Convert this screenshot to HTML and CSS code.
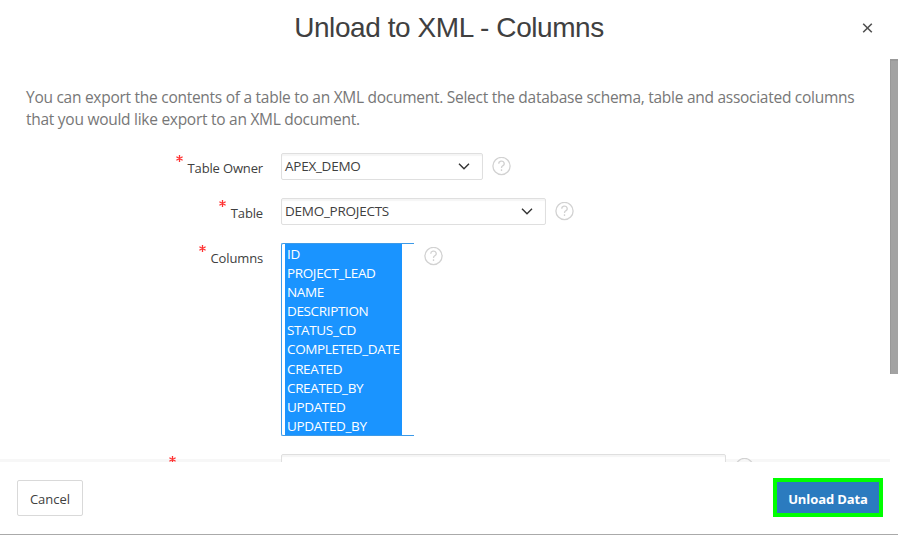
FILE: index.html
```html
<!DOCTYPE html>
<html lang="en">
<head>
<meta charset="utf-8">
<title>Unload to XML - Columns</title>
<link rel="stylesheet" href="styles.css">
</head>
<body>
<div class="dialog">
  <header class="header">
    <h1 class="title">Unload to XML - Columns</h1>
    <svg class="close" width="11" height="10" viewBox="0 0 11 10"><path d="M1.2.8l8.6 8.4M9.8.8L1.2 9.2"/></svg>
  </header>
  <main class="content">
    <div class="body">
      <p class="intro"><span class="line">You can export the contents of a table to an XML document. Select the database schema, table and associated columns</span> <span class="line">that you would like export to an XML document.</span></p>
      <div class="row">
        <div class="label"><svg class="req" viewBox="0 0 7 7"><path d="M3.5 0v7M.4 1.7l6.2 3.6M6.6 1.7L.4 5.3"/></svg><span class="name">Table Owner</span></div>
        <div class="select short"><span>APEX_DEMO</span><svg width="12" height="7" viewBox="0 0 12 7"><path d="M1 .8l5 4.9L11 .8"/></svg></div>
        <svg class="help" viewBox="0 0 19 19"><circle cx="9.5" cy="9" r="8.6"/><path d="M6.8 6.7a2.7 2.5 0 1 1 3.9 2.1c-.9.5-1.2.8-1.2 2.2M9.5 12.3v1.6"/></svg>
      </div>
      <div class="row">
        <div class="label"><svg class="req" viewBox="0 0 7 7"><path d="M3.5 0v7M.4 1.7l6.2 3.6M6.6 1.7L.4 5.3"/></svg><span class="name">Table</span></div>
        <div class="select wide"><span>DEMO_PROJECTS</span><svg width="12" height="7" viewBox="0 0 12 7"><path d="M1 .8l5 4.9L11 .8"/></svg></div>
        <svg class="help" viewBox="0 0 19 19"><circle cx="9.5" cy="9" r="8.6"/><path d="M6.8 6.7a2.7 2.5 0 1 1 3.9 2.1c-.9.5-1.2.8-1.2 2.2M9.5 12.3v1.6"/></svg>
      </div>
      <div class="row">
        <div class="label"><svg class="req" viewBox="0 0 7 7"><path d="M3.5 0v7M.4 1.7l6.2 3.6M6.6 1.7L.4 5.3"/></svg><span class="name">Columns</span></div>
        <div class="list">
          <ul class="options">
            <li>ID</li><li>PROJECT_LEAD</li><li>NAME</li><li>DESCRIPTION</li><li>STATUS_CD</li><li>COMPLETED_DATE</li><li>CREATED</li><li>CREATED_BY</li><li>UPDATED</li><li>UPDATED_BY</li>
          </ul>
        </div>
        <svg class="help list-help" viewBox="0 0 19 19"><circle cx="9.5" cy="9" r="8.6"/><path d="M6.8 6.7a2.7 2.5 0 1 1 3.9 2.1c-.9.5-1.2.8-1.2 2.2M9.5 12.3v1.6"/></svg>
      </div>
      <div class="row">
        <div class="label last"><svg class="req" viewBox="0 0 7 7"><path d="M3.5 0v7M.4 1.7l6.2 3.6M6.6 1.7L.4 5.3"/></svg></div>
        <div class="select field"></div>
        <svg class="help" viewBox="0 0 19 19"><circle cx="9.5" cy="9" r="8.6"/></svg>
      </div>
    </div>
    <div class="scrollbar"><div class="thumb"></div></div>
  </main>
  <footer class="footer">
    <button class="cancel"><span>Cancel</span></button>
    <button class="unload"><span>Unload Data</span></button>
  </footer>
</div>
</body>
</html>
```
FILE: styles.css
```css
* { box-sizing: border-box; }
body { margin: 0; background: #fff; overflow: hidden; }
.dialog {
  width: 898px; height: 535px;
  display: flex; flex-direction: column;
  border-bottom: 1px solid #aaa;
  font-family: "Open Sans", "Noto Sans", sans-serif;
  font-size: 13px; color: #404040;
}
.header { height: 59px; flex: none; display: grid; grid-template-columns: 45px 1fr 45px; }
.title {
  grid-column: 2; margin: 0; text-align: center;
  font: 400 28px/32px "Liberation Sans", Arial, sans-serif;
  letter-spacing: -0.43px;
  padding-top: 12px; color: #404040; white-space: nowrap;
}
.close { margin: 23px 0 0 9px; stroke: #505050; stroke-width: 1.6; fill: none; }
.content { height: 403px; flex: none; display: flex; overflow: hidden; }
.body {
  width: 890px; height: 403px; overflow: hidden;
  padding: 27px 26px 0;
  background: linear-gradient(#f7f7f7, #f7f7f7) bottom / 100% 3px no-repeat;
}
.intro { margin: 0 0 23px; color: #777; font-size: 15.5px; line-height: 22px; letter-spacing: -0.27px; }
.line { display: block; white-space: nowrap; }
.row { display: flex; align-items: flex-start; margin-bottom: 18px; }
.label {
  width: 237px; margin-right: 18px; height: 27px;
  display: flex; justify-content: flex-end; gap: 5px;
}
.label.last { padding-right: 87px; }
.req { width: 7px; height: 7px; margin-top: 2px; stroke: #f33; stroke-width: 1.3; fill: none; }
.name { line-height: 30px; white-space: nowrap; letter-spacing: -0.15px; }
.select {
  height: 27px; border: 1px solid #dfdfdf; border-radius: 2px;
  box-shadow: inset 0 2px 1px #f5f5f5; background: #fff;
  padding: 0 12px 0 3px;
  display: flex; align-items: center; justify-content: space-between;
  font-size: 13.5px; line-height: 25px; letter-spacing: -0.25px;
}
.select svg { stroke: #333; stroke-width: 1.4; fill: none; }
.short { width: 202px; }
.wide { width: 265px; }
.field { width: 445px; }
.help { width: 19px; height: 19px; margin: 4px 0 0 9px; stroke: #d2d2d2; stroke-width: 1.3; fill: none; }
.list-help { margin-left: 10px; }
.list {
  width: 133px; height: 193px; padding-left: 3px;
  border: solid #3c9ae8; border-width: 1px 0 1px 1px; border-radius: 2px 0 0 2px;
}
.options {
  margin: 0; padding: 0 0 0 2px; list-style: none;
  width: 117px; height: 191px; background: #1a94ff; color: #fff;
}
.options li { height: 19.1px; font-size: 13.5px; line-height: 20.6px; white-space: nowrap; letter-spacing: -0.36px; }
.scrollbar { width: 8px; }
.thumb { height: 315px; background: #a3a3a3; border-top: 2px solid #999; border-left: 1px solid #999; }
.footer { height: 72px; display: flex; justify-content: space-between; padding: 16px 15px 0 17px; }
button { font-family: inherit; font-size: 13px; padding: 0; white-space: nowrap; }
.cancel {
  width: 66px; height: 36px; margin-top: 2px; padding-top: 2px;
  border: 1px solid #d9d9d9; border-radius: 2px; background: #fff; color: #404040;
}
.unload {
  width: 110px; height: 39px; padding-top: 2px; border: 4px solid #0f0;
  background: #2b7bbf; color: #fff; font-weight: 700; letter-spacing: -0.1px;
}
```
